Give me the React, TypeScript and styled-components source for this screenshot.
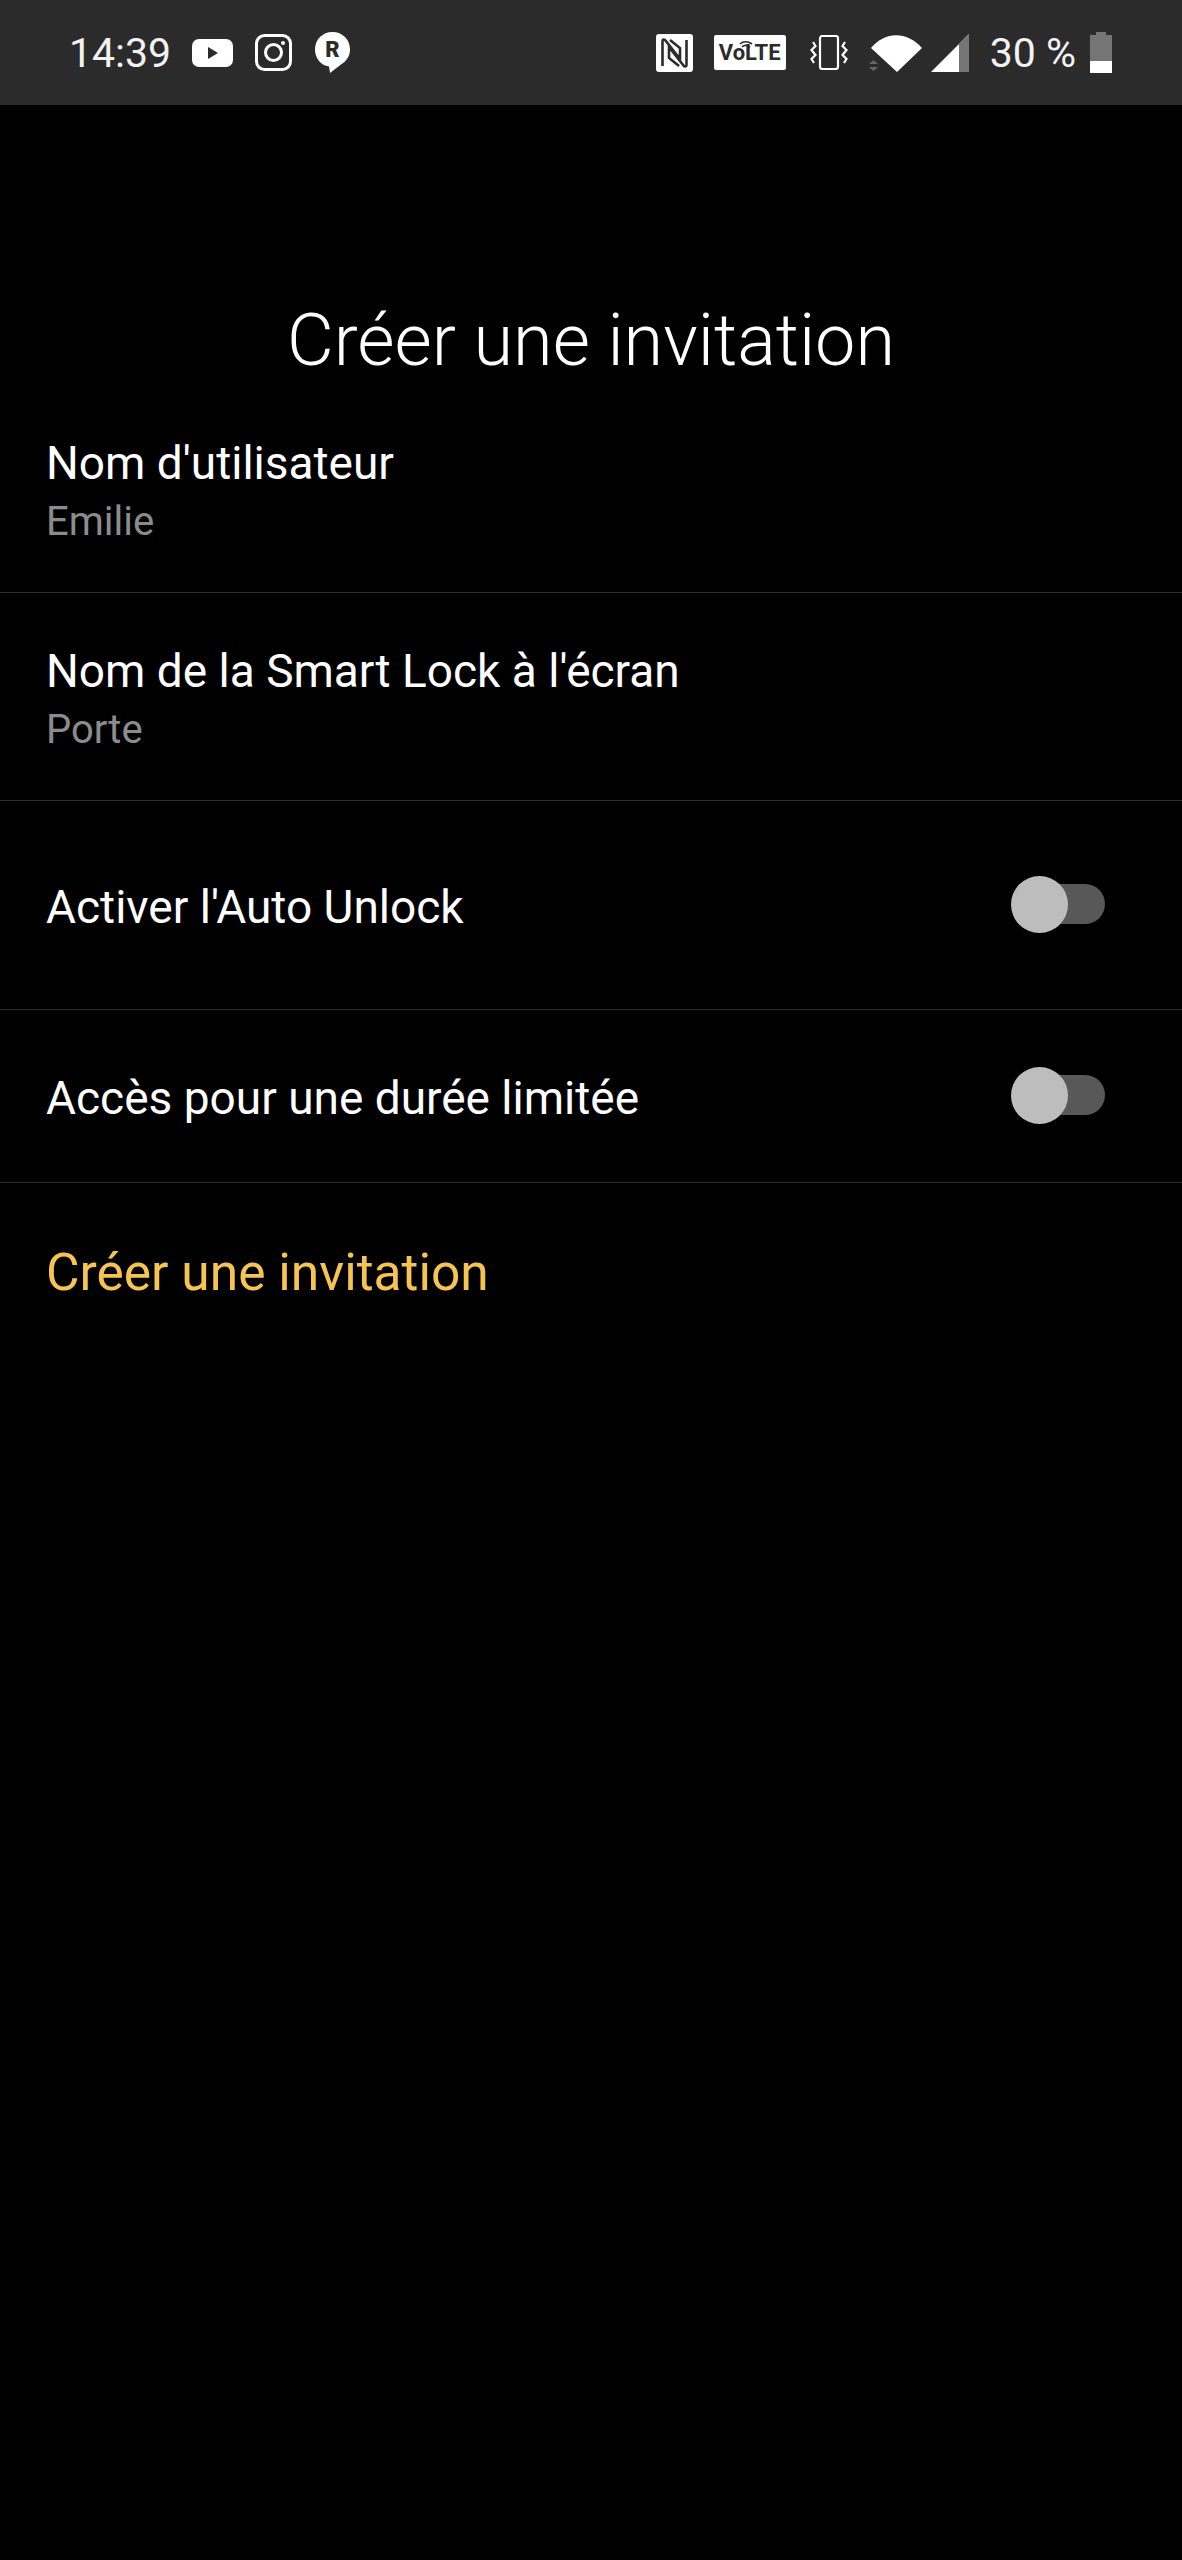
import React from 'react';
import styled, { createGlobalStyle } from 'styled-components';

const GlobalStyle = createGlobalStyle`
  html, body {
    margin: 0;
    padding: 0;
    background: #000;
  }
  body {
    font-family: Roboto, "Noto Sans", sans-serif;
    -webkit-font-smoothing: antialiased;
  }
`;

const Screen = styled.div`
  width: 1182px;
  height: 2560px;
  background: #000;
  color: #fff;
  overflow: hidden;
`;

const StatusBar = styled.div`
  height: 105px;
  box-sizing: border-box;
  padding: 0 70px 0 69px;
  background: #2b2b2b;
  display: flex;
  justify-content: space-between;
  align-items: center;
`;

const StatusGroup = styled.div`
  display: flex;
  align-items: center;
`;

const Slot = styled.div<{ $ml: number }>`
  display: flex;
  align-items: center;
  margin-left: ${(p) => p.$ml}px;
`;

const StatusText = styled.span`
  font-size: 41px;
  line-height: 46px;
  color: #f2f2f2;
`;

const VolteBadge = styled.div`
  position: relative;
  width: 72px;
  height: 35px;
  background: #fff;
  border-radius: 2px;
  color: #2b2b2b;
  font-size: 22px;
  font-weight: 700;
  line-height: 36px;
  text-align: center;
  white-space: nowrap;
`;

const VolteWaves = styled.svg`
  position: absolute;
  left: 25px;
  top: 5px;
`;

const Title = styled.h1`
  margin: 0;
  height: 280px;
  box-sizing: border-box;
  padding-top: 208px;
  font-size: 72px;
  line-height: 56px;
  font-weight: 300;
  text-align: center;
  color: #fff;
`;

const Row = styled.div<{ $height: number }>`
  height: ${(p) => p.$height}px;
  box-sizing: border-box;
  padding: 0 47px 0 46px;
  border-bottom: 1px solid #2e2e2e;
  display: flex;
  align-items: center;
  justify-content: space-between;
`;

const FieldRow = styled(Row)`
  display: block;
  padding-top: 54px;
`;

const Label = styled.div`
  font-size: 46px;
  line-height: 48px;
  color: #fff;
`;

const ToggleLabel = styled(Label)`
  margin-top: 3px;
`;

const Value = styled.div`
  margin-top: 11px;
  font-size: 40px;
  line-height: 48px;
  color: #8c8c8c;
`;

const Toggle = styled.div`
  position: relative;
  width: 94px;
  height: 57px;
  margin-right: 30px;
  margin-top: -2px;
  flex: none;
`;

const ToggleTrack = styled.div`
  position: absolute;
  left: 20px;
  right: 0;
  top: 8px;
  height: 40px;
  border-radius: 20px;
  background: #585858;
`;

const ToggleKnob = styled.div`
  position: absolute;
  left: 0;
  top: 0;
  width: 57px;
  height: 57px;
  border-radius: 50%;
  background: #bdbdbd;
`;

const ActionRow = styled.div`
  padding: 64px 46px 0;
  font-size: 51.5px;
  line-height: 52px;
  color: #f5c451;
`;

const YoutubeIcon = () => (
  <svg width="41" height="28" viewBox="0 0 41 28">
    <rect width="41" height="28" rx="7" fill="#fff" />
    <path d="M16 8 L26 14 L16 20 Z" fill="#2b2b2b" />
  </svg>
);

const InstagramIcon = () => (
  <svg width="37" height="37" viewBox="0 0 37 37" fill="none" stroke="#fff" strokeWidth="3">
    <rect x="1.5" y="1.5" width="34" height="34" rx="8" />
    <circle cx="18.5" cy="18.5" r="8" />
    <circle cx="28" cy="9" r="2" fill="#fff" stroke="none" />
  </svg>
);

const ReplikaIcon = () => (
  <svg width="35" height="41" viewBox="0 0 35 41">
    <path
      d="M17.5 0 C27.5 0 35 7.5 35 17.5 C35 24.5 31 29.5 26 32.5 L15 41 L14 34.5 C6 33.5 0 26.5 0 17.5 C0 7.5 7.5 0 17.5 0 Z"
      fill="#fff"
    />
    <text
      x="17.5"
      y="25"
      textAnchor="middle"
      fontFamily="Roboto, sans-serif"
      fontSize="22"
      fontWeight="900"
      fill="#2b2b2b"
    >
      R
    </text>
  </svg>
);

const NfcIcon = () => (
  <svg width="37" height="38" viewBox="0 0 37 38">
    <rect width="37" height="38" rx="3" fill="#fff" />
    <path
      d="M6.5 32 V7 C6.5 5 8.5 5 9.5 6.5 L24 25 V14 L14 6 M30.5 6 V31 C30.5 33 28.5 33 27.5 31.5 L13 13 V24 L23 32"
      fill="none"
      stroke="#2b2b2b"
      strokeWidth="2.6"
    />
  </svg>
);

const VibrateIcon = () => (
  <svg width="38" height="35" viewBox="0 0 38 35" fill="none" stroke="#fff" strokeWidth="2.2">
    <rect x="10" y="1" width="18" height="33" rx="2.5" />
    <path d="M3 7 L5.5 11 L1.5 15 L5.5 20 L1.5 24 L4 28" />
    <path d="M35 7 L32.5 11 L36.5 15 L32.5 20 L36.5 24 L34 28" />
  </svg>
);

const WifiIcon = () => (
  <svg width="54" height="38" viewBox="0 0 54 38">
    <path d="M2 14 C16 -3 38 -3 53 14 L28 38 Z" fill="#fff" />
    <path d="M0 30 L4.5 26 L9 30 Z M0 33 L4.5 37 L9 33 Z" fill="#666" />
  </svg>
);

const SignalIcon = () => (
  <svg width="38" height="38" viewBox="0 0 38 38">
    <path d="M0 38 L38 0 V38 Z" fill="#fff" />
    <path d="M28 10 L38 0 V38 H28 Z" fill="#757575" />
  </svg>
);

const BatteryIcon = () => (
  <svg width="22" height="41" viewBox="0 0 22 41">
    <path d="M6 0 H16 V3 H22 V29 H0 V3 H6 Z" fill="#757575" />
    <rect y="29" width="22" height="12" fill="#fff" />
  </svg>
);

type SettingField = {
  label: string;
  value: string;
};

const fields: SettingField[] = [
  { label: "Nom d'utilisateur", value: 'Emilie' },
  { label: "Nom de la Smart Lock à l'écran", value: 'Porte' },
];

const toggles = [
  { label: "Activer l'Auto Unlock", height: 209 },
  { label: 'Accès pour une durée limitée', height: 173 },
];

export default function App() {
  return (
    <Screen>
      <GlobalStyle />
      <StatusBar>
        <StatusGroup>
          <StatusText>14:39</StatusText>
          <Slot $ml={21}>
            <YoutubeIcon />
          </Slot>
          <Slot $ml={22}>
            <InstagramIcon />
          </Slot>
          <Slot $ml={23}>
            <ReplikaIcon />
          </Slot>
        </StatusGroup>
        <StatusGroup>
          <Slot $ml={0}>
            <NfcIcon />
          </Slot>
          <Slot $ml={21}>
            <VolteBadge>
              VoLTE
              <VolteWaves width="14" height="12" viewBox="0 0 14 12" fill="none" stroke="#2b2b2b" strokeWidth="1.6">
                <path d="M1 4 C4 1 9 1 13 4 M3 7 C5 5 8 5 11 7" />
              </VolteWaves>
            </VolteBadge>
          </Slot>
          <Slot $ml={24}>
            <VibrateIcon />
          </Slot>
          <Slot $ml={21}>
            <WifiIcon />
          </Slot>
          <Slot $ml={8}>
            <SignalIcon />
          </Slot>
          <Slot $ml={21}>
            <StatusText>30 %</StatusText>
          </Slot>
          <Slot $ml={14}>
            <BatteryIcon />
          </Slot>
        </StatusGroup>
      </StatusBar>
      <Title>Créer une invitation</Title>
      {fields.map((field) => (
        <FieldRow key={field.label} $height={208}>
          <Label>{field.label}</Label>
          <Value>{field.value}</Value>
        </FieldRow>
      ))}
      {toggles.map((item) => (
        <Row key={item.label} $height={item.height}>
          <ToggleLabel>{item.label}</ToggleLabel>
          <Toggle>
            <ToggleTrack />
            <ToggleKnob />
          </Toggle>
        </Row>
      ))}
      <ActionRow>Créer une invitation</ActionRow>
    </Screen>
  );
}
